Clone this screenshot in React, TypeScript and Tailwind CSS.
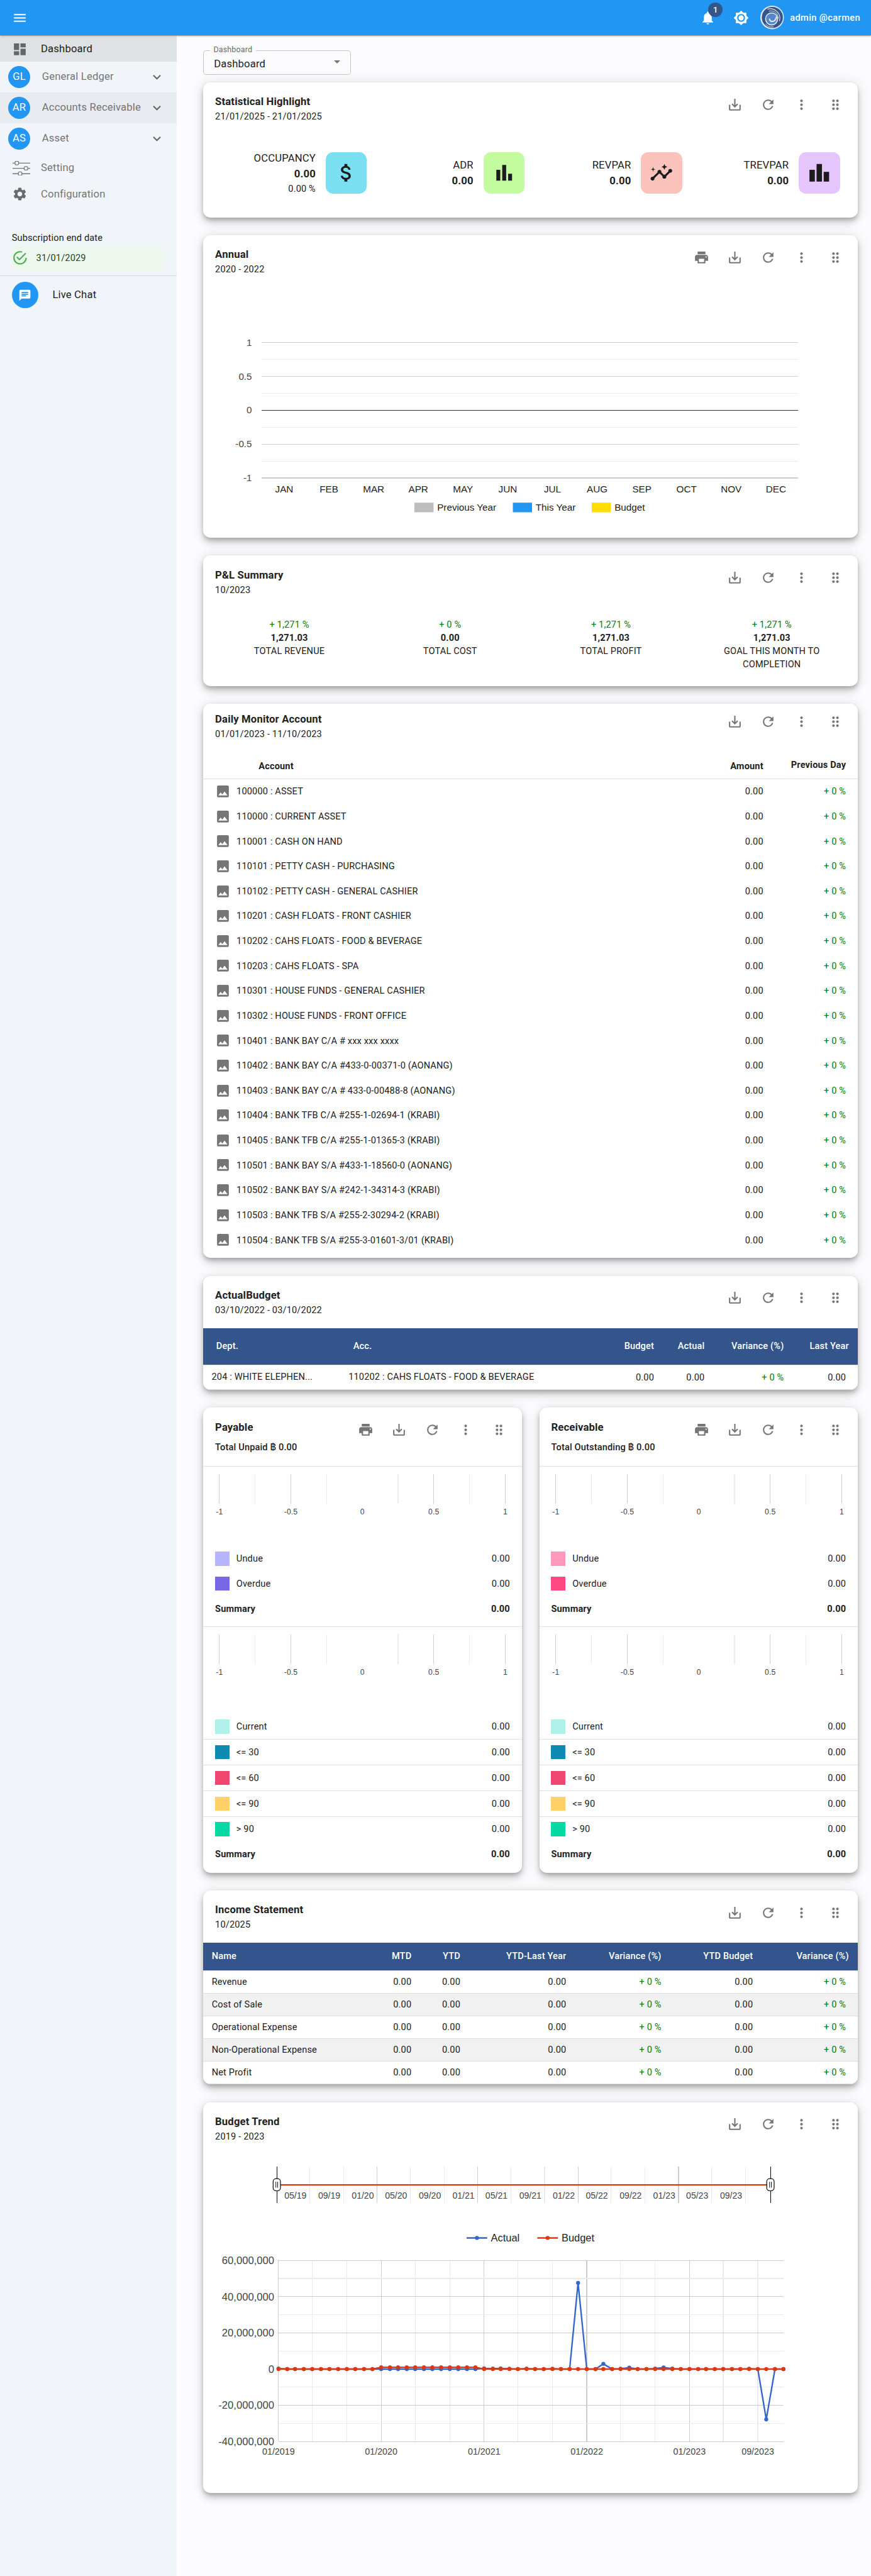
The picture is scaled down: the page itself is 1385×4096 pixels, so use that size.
import type { ReactNode } from "react";
import {
  MdAttachMoney,
  MdBarChart,
  MdBrightness7,
  MdChat,
  MdDashboard,
  MdDragIndicator,
  MdExpandMore,
  MdImage,
  MdInsights,
  MdLeaderboard,
  MdMenu,
  MdMoreVert,
  MdNotifications,
  MdPrint,
  MdRefresh,
  MdSaveAlt,
  MdSettings,
} from "react-icons/md";

const ARIAL = "'Liberation Sans', Arial, sans-serif";

/* ---------- header ---------- */

function Logo() {
  return (
    <svg viewBox="0 0 192 192" className="size-8">
      <circle cx="96" cy="96" r="96" fill="#e6e8ea" />
      <circle cx="98" cy="96" r="86" fill="#33558c" />
      <circle cx="92" cy="108" r="49" fill="#5585cb" stroke="#e6e8ea" strokeWidth="8" />
      <g fill="none" stroke="#e6e8ea" strokeLinecap="round">
        <path d="M60 28 C112 14 174 60 156 124" strokeWidth="6" />
        <path d="M72 44 C116 36 148 64 146 104" strokeWidth="5" />
        <path d="M75 110 C78 136 122 138 130 94" strokeWidth="11" />
        <path d="M44 150 C58 168 82 178 106 172" strokeWidth="5" />
      </g>
    </svg>
  );
}

function TopBar() {
  return (
    <header className="relative z-10 flex h-12 items-center bg-[#2196f3] pr-[14.5px] pl-4 text-white shadow-[0_1px_1px_rgba(0,0,0,0.35),0_2px_2px_rgba(0,0,0,0.15)]">
      <MdMenu className="size-[21.33px]" />
      <div className="ml-auto flex items-center">
        <div className="relative flex h-[45.33px] w-[45.33px] items-center justify-center">
          <MdNotifications className="size-[21.33px]" />
          <span className="absolute top-[2px] left-[23px] flex size-5 items-center justify-center rounded-full bg-[#34558b] text-[11px] font-medium">
            1
          </span>
        </div>
        <div className="flex h-[45.33px] w-[45.33px] items-center justify-center">
          <MdBrightness7 className="size-[21.33px]" />
        </div>
        <div className="ml-[3.5px]">
          <Logo />
        </div>
        <span className="ml-2 pt-[1.6px] text-[12.44px] font-medium tracking-[0.0286em]">admin @carmen</span>
      </div>
    </header>
  );
}

/* ---------- sidebar ---------- */

function SlidersIcon() {
  return (
    <svg viewBox="0 0 24 20" className="h-5 w-6" fill="none" stroke="#757575" strokeWidth="1.1">
      <path d="M0 2.8h3.2M8.4 2.8H24M0 9.9h15.6M20.8 9.9H24M0 17.3h7.6M12.8 17.3H24" />
      <rect x="3.4" y="0.4" width="4.8" height="4.8" rx="1.6" />
      <rect x="15.8" y="7.5" width="4.8" height="4.8" rx="1.6" />
      <rect x="7.8" y="14.9" width="4.8" height="4.8" rx="1.6" />
    </svg>
  );
}

function ModuleRow({ code, label, active }: { code: string; label: string; active?: boolean }) {
  return (
    <div className={`flex h-[42px] items-center pr-4 pl-[11px] ${active ? "bg-[#e8ebf0]" : ""}`}>
      <span className="flex size-[30px] items-center justify-center rounded-full bg-[#2196f3] text-[14.22px] leading-none text-white">
        {code}
      </span>
      <span className="ml-4 text-[14.22px] tracking-[0.0094em] text-[#757575]">{label}</span>
      <MdExpandMore className="ml-auto size-[21.33px] text-[#666]" />
    </div>
  );
}

function Sidebar() {
  return (
    <aside className="w-60 shrink-0 bg-[#f1f5fa] pt-[1.7px] text-[14.22px] tracking-[0.0094em]">
      <div className="flex h-[33.8px] items-center bg-[#dee2e5] pl-4">
        <MdDashboard className="size-[21.33px] text-[#666]" />
        <span className="ml-[18.2px]">Dashboard</span>
      </div>
      <ModuleRow code="GL" label="General Ledger" />
      <ModuleRow code="AR" label="Accounts Receivable" active />
      <ModuleRow code="AS" label="Asset" />
      <div className="flex h-[37.3px] items-center pl-[17px] text-[#757575]">
        <SlidersIcon />
        <span className="ml-[14.5px]">Setting</span>
      </div>
      <div className="flex h-[33.8px] items-center pl-4 text-[#757575]">
        <MdSettings className="size-[21.33px] text-[#6b6b6b]" />
        <span className="ml-[18.2px] pt-[1px]">Configuration</span>
      </div>
      <div className="mt-[33.6px] px-4 text-[12.44px] leading-[18px] tracking-[0.0107em]">
        <div>Subscription end date</div>
        <div className="mt-[0.6px] flex h-[34.8px] items-center rounded-[10px] bg-[#edf7ed] text-[#1e4620]">
          <svg viewBox="0 0 24 24" className="size-[22px] fill-[#4caf50]">
            <path d="M20,12A8,8 0 0,1 12,20A8,8 0 0,1 4,12A8,8 0 0,1 12,4C12.76,4 13.5,4.11 14.2,4.31L15.77,2.74C14.61,2.26 13.34,2 12,2A10,10 0 0,0 2,12A10,10 0 0,0 12,22A10,10 0 0,0 22,12M7.91,10.08L6.5,11.5L11,16L21,6L19.59,4.58L11,13.17L7.91,10.08Z" />
          </svg>
          <span className="ml-[11.2px]">31/01/2029</span>
        </div>
      </div>
      <div className="mt-[6px] flex items-center border-t border-[#d3d8dd] px-4 pt-2">
        <span className="flex size-9 items-center justify-center rounded-full bg-[#2196f3]">
          <MdChat className="size-[18px] text-white" />
        </span>
        <span className="ml-[19.2px]">Live Chat</span>
      </div>
    </aside>
  );
}

/* ---------- shared card ---------- */

function IconButton({ children }: { children: ReactNode }) {
  return <span className="flex size-[45.33px] items-center justify-center text-[#757575]">{children}</span>;
}

type CardProps = {
  title: string;
  subtitle: string;
  className: string;
  print?: boolean;
  compact?: boolean;
  wideSubtitle?: boolean;
  children: ReactNode;
};

function Card({ title, subtitle, className, print, compact, wideSubtitle, children }: CardProps) {
  return (
    <section
      className={`overflow-hidden rounded-[10px] bg-white shadow-[0_3px_5px_-1px_rgba(0,0,0,0.2),0_6px_10px_rgba(0,0,0,0.14),0_1px_18px_rgba(0,0,0,0.12)] ${className}`}
    >
      <div className={`flex items-start pr-2 pl-4 ${compact ? "h-[54.6px] pt-[1.6px]" : "h-[60.6px] pt-[7.6px]"}`}>
        <div className="pt-[8.9px]">
          <h2 className="text-[14.22px] leading-[21.33px] font-bold tracking-[0.0094em]">{title}</h2>
          <p
            className={`text-[12.44px] leading-[17.8px] tracking-[0.0107em] ${wideSubtitle ? "mt-[7.6px] font-medium" : ""}`}
          >
            {subtitle}
          </p>
        </div>
        <div className="ml-auto flex">
          {print && (
            <IconButton>
              <MdPrint className="size-[21.33px]" />
            </IconButton>
          )}
          <IconButton>
            <MdSaveAlt className="size-[21.33px]" />
          </IconButton>
          <IconButton>
            <MdRefresh className="size-[21.33px]" />
          </IconButton>
          <IconButton>
            <MdMoreVert className="size-[21.33px]" />
          </IconButton>
          <IconButton>
            <MdDragIndicator className="size-[21.33px]" />
          </IconButton>
        </div>
      </div>
      {children}
    </section>
  );
}

/* ---------- statistical highlight ---------- */

const stats = [
  { label: "OCCUPANCY", value: "0.00", extra: "0.00 %", tile: "bg-[#7bdff2]", Icon: MdAttachMoney },
  { label: "ADR", value: "0.00", tile: "bg-[#c3fc9f]", Icon: MdBarChart },
  { label: "REVPAR", value: "0.00", tile: "bg-[#fcc3bc]", Icon: MdInsights },
  { label: "TREVPAR", value: "0.00", tile: "bg-[#e6c5ff]", Icon: MdLeaderboard },
];

function StatisticalHighlight() {
  return (
    <Card title="Statistical Highlight" subtitle="21/01/2025 - 21/01/2025" className="h-[183.4px]">
      <div className="mt-[34.5px] grid grid-cols-4 pr-6 pl-2">
        {stats.map(({ label, value, extra, tile, Icon }) => (
          <div key={label} className="flex h-14 items-center justify-end">
            <div className="pt-[1px] text-right text-[14.22px] leading-[21.33px] tracking-[0.0094em]">
              <div>{label}</div>
              <div className="font-bold">{value}</div>
              {extra && <div className="text-[12.44px] leading-[17.8px] tracking-[0.0107em]">{extra}</div>}
            </div>
            <div className={`ml-[13.6px] flex size-14 items-center justify-center rounded-[10px] ${tile}`}>
              <Icon className="size-8 text-[#1c1c1c]" />
            </div>
          </div>
        ))}
      </div>
    </Card>
  );
}

/* ---------- annual ---------- */

const months = ["JAN", "FEB", "MAR", "APR", "MAY", "JUN", "JUL", "AUG", "SEP", "OCT", "NOV", "DEC"];
const annualLegend = [
  { label: "Previous Year", x: 562.6, fill: "#bdbdbd" },
  { label: "This Year", x: 696.3, fill: "#2196f3" },
  { label: "Budget", x: 803.3, fill: "#ffdd00" },
];

function Annual() {
  const ticks = ["1", "", "0.5", "", "0", "", "-0.5", "", "-1"];
  return (
    <Card title="Annual" subtitle="2020 - 2022" className="h-[411px]" print>
      <svg viewBox="276 379.6 888 350" className="block h-[350px] w-full" fontFamily={ARIAL} fontSize="13">
        {ticks.map((t, i) => {
          const y = 464.5 + i * 23;
          return (
            <g key={i}>
              <line
                x1="355.5"
                x2="1083.7"
                y1={y}
                y2={y}
                stroke={i === 4 ? "#333" : t ? "#ccc" : "#ebebeb"}
                shapeRendering="crispEdges"
              />
              {t && (
                <text x="342.1" y={y + 4.4} textAnchor="end" fill="#444">
                  {t}
                </text>
              )}
            </g>
          );
        })}
        {months.map((m, i) => (
          <text key={m} x={386 + i * 60.67} y="667.7" textAnchor="middle" fill="#222">
            {m}
          </text>
        ))}
        {annualLegend.map((l) => (
          <g key={l.label}>
            <rect x={l.x} y="682" width="26" height="13" fill={l.fill} />
            <text x={l.x + 31} y="693" fill="#222">
              {l.label}
            </text>
          </g>
        ))}
      </svg>
    </Card>
  );
}

/* ---------- P&L summary ---------- */

const pnl = [
  { change: "+ 1,271 %", value: "1,271.03", label: "TOTAL REVENUE" },
  { change: "+ 0 %", value: "0.00", label: "TOTAL COST" },
  { change: "+ 1,271 %", value: "1,271.03", label: "TOTAL PROFIT" },
  { change: "+ 1,271 %", value: "1,271.03", label: "GOAL THIS MONTH TO COMPLETION" },
];

function PnlSummary() {
  return (
    <Card title="P&L Summary" subtitle="10/2023" className="h-[177.4px]">
      <div className="mt-[24.8px] grid grid-cols-4 px-[7.5px] text-center text-[12.44px] leading-[17.7px] tracking-[0.0107em]">
        {pnl.map((p) => (
          <div key={p.label} className="px-6">
            <div className="text-[#008000]">{p.change}</div>
            <div className="font-bold">{p.value}</div>
            <div>{p.label}</div>
          </div>
        ))}
      </div>
    </Card>
  );
}

/* ---------- daily monitor ---------- */

const accounts = [
  "100000 : ASSET",
  "110000 : CURRENT ASSET",
  "110001 : CASH ON HAND",
  "110101 : PETTY CASH - PURCHASING",
  "110102 : PETTY CASH - GENERAL CASHIER",
  "110201 : CASH FLOATS - FRONT CASHIER",
  "110202 : CAHS FLOATS - FOOD & BEVERAGE",
  "110203 : CAHS FLOATS - SPA",
  "110301 : HOUSE FUNDS - GENERAL CASHIER",
  "110302 : HOUSE FUNDS - FRONT OFFICE",
  "110401 : BANK BAY C/A # xxx xxx xxxx",
  "110402 : BANK BAY C/A #433-0-00371-0 (AONANG)",
  "110403 : BANK BAY C/A # 433-0-00488-8 (AONANG)",
  "110404 : BANK TFB C/A #255-1-02694-1 (KRABI)",
  "110405 : BANK TFB C/A #255-1-01365-3 (KRABI)",
  "110501 : BANK BAY S/A #433-1-18560-0 (AONANG)",
  "110502 : BANK BAY S/A #242-1-34314-3 (KRABI)",
  "110503 : BANK TFB S/A #255-2-30294-2 (KRABI)",
  "110504 : BANK TFB S/A #255-3-01601-3/01 (KRABI)",
];

function DailyMonitor() {
  return (
    <Card title="Daily Monitor Account" subtitle="01/01/2023 - 11/10/2023" className="h-[752.1px]" compact>
      <div className="text-[12.44px] tracking-[0.0107em]">
        <div className="flex h-[47.4px] items-center border-b border-[#e0e0e0] pt-[14px] pr-4 pl-[75px] font-bold">
          <span>Account</span>
          <span className="ml-auto">Amount</span>
          <span className="w-[112.2px] pb-[2.4px] text-right">Previous Day</span>
        </div>
        {accounts.map((a) => (
          <div key={a} className="flex h-[33.83px] items-center pr-4 pl-[15.5px]">
            <MdImage className="size-[21.33px] text-[#757575]" />
            <span className="ml-[8.2px] pt-[1.2px]">{a}</span>
            <span className="ml-auto pt-[1.2px]">0.00</span>
            <span className="w-[112.2px] pt-[1.2px] text-right text-[#008000]">+ 0 %</span>
          </div>
        ))}
      </div>
    </Card>
  );
}

/* ---------- actual / budget ---------- */

function ActualBudget() {
  const cols = "grid grid-cols-[197px_330px_84.7px_68.6px_107.6px_1fr] items-center";
  return (
    <Card title="ActualBudget" subtitle="03/10/2022 - 03/10/2022" className="h-[155px]">
      <div className="mt-[10.4px] text-[12.44px] tracking-[0.0107em]">
        <div className={`${cols} h-[50.4px] border-b border-[#e0e0e0] bg-[#34558b] pt-[1px] font-medium text-white`}>
          <span className="pl-[17.4px]">Dept.</span>
          <span className="pl-[6.4px]">Acc.</span>
          <span className="text-right">Budget</span>
          <span className="text-right">Actual</span>
          <span className="text-right">Variance (%)</span>
          <span className="pr-3 text-right">Last Year</span>
        </div>
        <div className={`${cols} h-[33.6px] border-b border-[#e0e0e0] pt-[0.5px]`}>
          <span className="pl-[11.2px]">204 : WHITE ELEPHEN...</span>
          <span>110202 : CAHS FLOATS - FOOD &amp; BEVERAGE</span>
          <span className="pt-[1px] text-right">0.00</span>
          <span className="pt-[1px] text-right">0.00</span>
          <span className="pt-[1px] text-right text-[#008000]">+ 0 %</span>
          <span className="pt-[1px] pr-4 text-right">0.00</span>
        </div>
      </div>
    </Card>
  );
}

/* ---------- payable / receivable ---------- */

function MiniAxis({ className }: { className: string }) {
  const labels = ["-1", "", "-0.5", "", "0", "", "0.5", "", "1"];
  return (
    <svg viewBox="0 0 432 70" className={`block h-[70px] w-full ${className}`} fontFamily={ARIAL} fontSize="10.4">
      {labels.map((t, i) => {
        const x = 22 + i * 48.5;
        return (
          <g key={i}>
            {i !== 4 && (
              <line
                x1={x}
                x2={x}
                y1="0"
                y2="40"
                stroke={t ? "#ccc" : "#ebebeb"}
                shapeRendering="crispEdges"
              />
            )}
            {t && (
              <text x={x} y="54.9" textAnchor="middle" fill="#444">
                {t}
              </text>
            )}
          </g>
        );
      })}
    </svg>
  );
}

function LedgerRow({ color, label, className }: { color: string; label: string; className: string }) {
  return (
    <div className={`flex items-center px-4 ${className}`}>
      <span className={`h-[19.2px] w-[19.2px] ${color}`} />
      <span className="ml-[9.6px] pt-[1px]">{label}</span>
      <span className="ml-auto pt-[1px]">0.00</span>
    </div>
  );
}

function SummaryRow() {
  return (
    <div className="flex h-[33.8px] items-center justify-between px-4 pt-[1.8px] font-bold">
      <span>Summary</span>
      <span>0.00</span>
    </div>
  );
}

const aging = [
  { label: "Current", color: "bg-[#b0f0eb]" },
  { label: "<= 30", color: "bg-[#118ab2]" },
  { label: "<= 60", color: "bg-[#ef476f]" },
  { label: "<= 90", color: "bg-[#ffd166]" },
  { label: "> 90", color: "bg-[#06d9a3]" },
];

function AgingCard(p: { title: string; subtitle: string; undue: string; overdue: string }) {
  return (
    <Card title={p.title} subtitle={p.subtitle} className="h-[631px] flex-1" print wideSubtitle>
      <div className="mt-[18.6px] border-t border-[#e0e0e0] text-[12.44px] tracking-[0.0107em]">
        <MiniAxis className="mt-[10px]" />
        <div className="mt-[28.4px]">
          <LedgerRow color={p.undue} label="Undue" className="h-[33.6px]" />
          <LedgerRow color={p.overdue} label="Overdue" className="h-[33.6px]" />
          <SummaryRow />
        </div>
        <div className="mt-[7.4px] border-t border-[#e0e0e0] pt-[10.2px]">
          <MiniAxis className="" />
        </div>
        <div className="mt-[38px]">
          {aging.map((a, i) => (
            <LedgerRow
              key={a.label}
              color={a.color}
              label={a.label}
              className={i < 4 ? "h-[34.9px] border-b border-[#e0e0e0]" : "h-[33.8px]"}
            />
          ))}
          <SummaryRow />
        </div>
      </div>
    </Card>
  );
}

/* ---------- income statement ---------- */

const incomeRows = ["Revenue", "Cost of Sale", "Operational Expense", "Non-Operational Expense", "Net Profit"];

function IncomeStatement() {
  const cols =
    "grid grid-cols-[200px_82.5px_66.3px_143.7px_129.1px_124.4px_1fr] items-center border-b border-[#e0e0e0] pt-[1px]";
  return (
    <Card title="Income Statement" subtitle="10/2025" className="h-[263.6px]">
      <div className="mt-[10.4px] text-right text-[12.44px] tracking-[0.0107em]">
        <div className={`${cols} h-[38.2px] bg-[#34558b] font-medium text-white`}>
          <span className="pl-[11.4px] text-left">Name</span>
          <span>MTD</span>
          <span>YTD</span>
          <span>YTD-Last Year</span>
          <span>Variance (%)</span>
          <span>YTD Budget</span>
          <span className="pr-3">Variance (%)</span>
        </div>
        {incomeRows.map((r, i) => (
          <div key={r} className={`${cols} h-[30.88px] ${i % 2 ? "bg-[#f1f1f1]" : ""}`}>
            <span className="pl-[11.4px] text-left">{r}</span>
            <span>0.00</span>
            <span>0.00</span>
            <span>0.00</span>
            <span className="text-[#008000]">+ 0 %</span>
            <span>0.00</span>
            <span className="pr-4 text-[#008000]">+ 0 %</span>
          </div>
        ))}
      </div>
    </Card>
  );
}

/* ---------- budget trend ---------- */

const START = Date.UTC(2019, 0, 1);
const END = Date.UTC(2023, 11, 1);
const frac = (month: number) => (Date.UTC(2019, month, 1) - START) / (END - START);
const chartX = (month: number) => 378.2 + frac(month) * 685.3;
const rangeX = (month: number) => 375.9 + frac(month) * 670;
const chartY = (millions: number) => 3215 - millions * 2.4572;

const spikes: Record<number, number> = {
  0: 0.3, 24: 0.4, 25: 0.25, 26: 0.4, 27: 0.2, 29: 0.3, 32: 0.2, 35: 47.6, 38: 2.9,
  40: 0.2, 41: 0.8, 44: 0.3, 45: 0.9, 46: 0.3, 55: 0.2, 57: -27.8,
};
const series = Array.from({ length: 60 }, (_, i) => i);
const actual = series.map((i) => [chartX(i), chartY(spikes[i] ?? 0)]);
const budget = series.map((i) => [chartX(i), chartY(i >= 12 && i < 24 ? 1 : 0)]);

const rangeLabels = [
  "05/19", "09/19", "01/20", "05/20", "09/20", "01/21", "05/21",
  "09/21", "01/22", "05/22", "09/22", "01/23", "05/23", "09/23",
];
const yLabels = ["60,000,000", "40,000,000", "20,000,000", "0", "-20,000,000", "-40,000,000"];
const xLabels: [number, string][] = [
  [0, "01/2019"], [12, "01/2020"], [24, "01/2021"], [36, "01/2022"], [48, "01/2023"], [56, "09/2023"],
];

function Series({ points, color }: { points: number[][]; color: string }) {
  return (
    <g fill={color}>
      <polyline points={points.map((p) => p.join(",")).join(" ")} fill="none" stroke={color} strokeWidth="2" />
      {points.map(([x, y]) => (
        <circle key={x} cx={x} cy={y} r="2.7" />
      ))}
    </g>
  );
}

function Handle({ x }: { x: number }) {
  return (
    <g stroke="#000">
      <line x1={x} x2={x} y1="2940" y2="2990" shapeRendering="crispEdges" />
      <rect x={x - 5} y="2956.5" width="10" height="16.5" rx="4" fill="#fff" />
      <path d={`M${x - 1.2} 2960.8v8M${x + 1.2} 2960.8v8`} strokeWidth="0.8" />
    </g>
  );
}

function BudgetTrend() {
  return (
    <Card title="Budget Trend" subtitle="2019 - 2023" className="h-[530.8px]">
      <svg viewBox="276 2913.7 888 470" className="block h-[470px] w-full" fontFamily={ARIAL} fontSize="12" fill="#444">
        {rangeLabels.map((t, i) => {
          const x = rangeX(4 * (i + 1));
          return (
            <g key={t}>
              <line
                x1={x}
                x2={x}
                y1="2940"
                y2="2990"
                stroke={i % 3 === 2 ? "#ccc" : "#ebebeb"}
                shapeRendering="crispEdges"
              />
              <text x={x - 4.5} y="2984" textAnchor="end">
                {t}
              </text>
            </g>
          );
        })}
        <line x1="376" x2="1046" y1="2965" y2="2965" stroke="#dc3912" strokeWidth="2" />
        <Handle x={375.9} />
        <Handle x={1045.9} />

        <g fontSize="14" fill="#222">
          <line x1="633.5" x2="661.5" y1="3037" y2="3037" stroke="#3366cc" strokeWidth="2" />
          <circle cx="647.5" cy="3037" r="2.7" fill="#3366cc" />
          <text x="666.5" y="3042">
            Actual
          </text>
          <line x1="729.5" x2="757.5" y1="3037" y2="3037" stroke="#dc3912" strokeWidth="2" />
          <circle cx="743.5" cy="3037" r="2.7" fill="#dc3912" />
          <text x="762.5" y="3042">
            Budget
          </text>
        </g>

        {Array.from({ length: 15 }, (_, i) => i * 4).map((m) => (
          <line
            key={m}
            x1={chartX(m)}
            x2={chartX(m)}
            y1="3067.6"
            y2="3313.3"
            stroke={m % 12 === 0 ? "#ccc" : "#ebebeb"}
            shapeRendering="crispEdges"
          />
        ))}
        {Array.from({ length: 11 }, (_, i) => 60 - i * 10).map((v, i) => (
          <line
            key={v}
            x1="378.2"
            x2="1063.5"
            y1={chartY(v)}
            y2={chartY(v)}
            stroke={i % 2 ? "#ebebeb" : "#ccc"}
            shapeRendering="crispEdges"
          />
        ))}
        {yLabels.map((t, i) => (
          <text key={t} x="372.4" y={chartY(60 - i * 20) + 5} textAnchor="end" fontSize="14.2">
            {t}
          </text>
        ))}
        {xLabels.map(([m, t]) => (
          <text key={t} x={chartX(m)} y="3331" textAnchor="middle" fontSize="12.2">
            {t}
          </text>
        ))}
        <Series points={actual} color="#3366cc" />
        <Series points={budget} color="#dc3912" />
      </svg>
    </Card>
  );
}

/* ---------- page ---------- */

function DashboardSelect() {
  return (
    <div className="relative flex h-[33.4px] w-[200px] items-center rounded-[4px] border border-[#c4c4c6] pr-[13px] pl-[13.5px]">
      <span className="absolute -top-[9px] left-2 bg-[#fcfcfe] px-[5px] text-[10.67px] leading-4 tracking-[0.0094em] text-[#6b6b6d]">
        Dashboard
      </span>
      <span className="pt-[6.4px] text-[14.22px] tracking-[0.0094em]">Dashboard</span>
      <span className="mb-[1.6px] ml-auto h-0 w-0 border-x-[4.5px] border-t-[4.6px] border-x-transparent border-t-[#757575]" />
    </div>
  );
}

export default function App() {
  return (
    <div className="flex h-[3496px] flex-col overflow-hidden bg-[#fcfcfe] font-[Roboto,Inter,sans-serif] text-[#212121] [zoom:1.1716]">
      <TopBar />
      <div className="flex grow">
        <Sidebar />
        <main className="flex grow flex-col gap-6 pt-5 pr-[18px] pl-9">
          <div className="-mb-[13.8px]">
            <DashboardSelect />
          </div>
          <StatisticalHighlight />
          <Annual />
          <PnlSummary />
          <DailyMonitor />
          <ActualBudget />
          <div className="flex gap-6">
            <AgingCard
              title="Payable"
              subtitle="Total Unpaid ฿ 0.00"
              undue="bg-[#b8b5ff]"
              overdue="bg-[#7868e6]"
            />
            <AgingCard
              title="Receivable"
              subtitle="Total Outstanding ฿ 0.00"
              undue="bg-[#ff99bb]"
              overdue="bg-[#ff4782]"
            />
          </div>
          <IncomeStatement />
          <BudgetTrend />
        </main>
      </div>
    </div>
  );
}
